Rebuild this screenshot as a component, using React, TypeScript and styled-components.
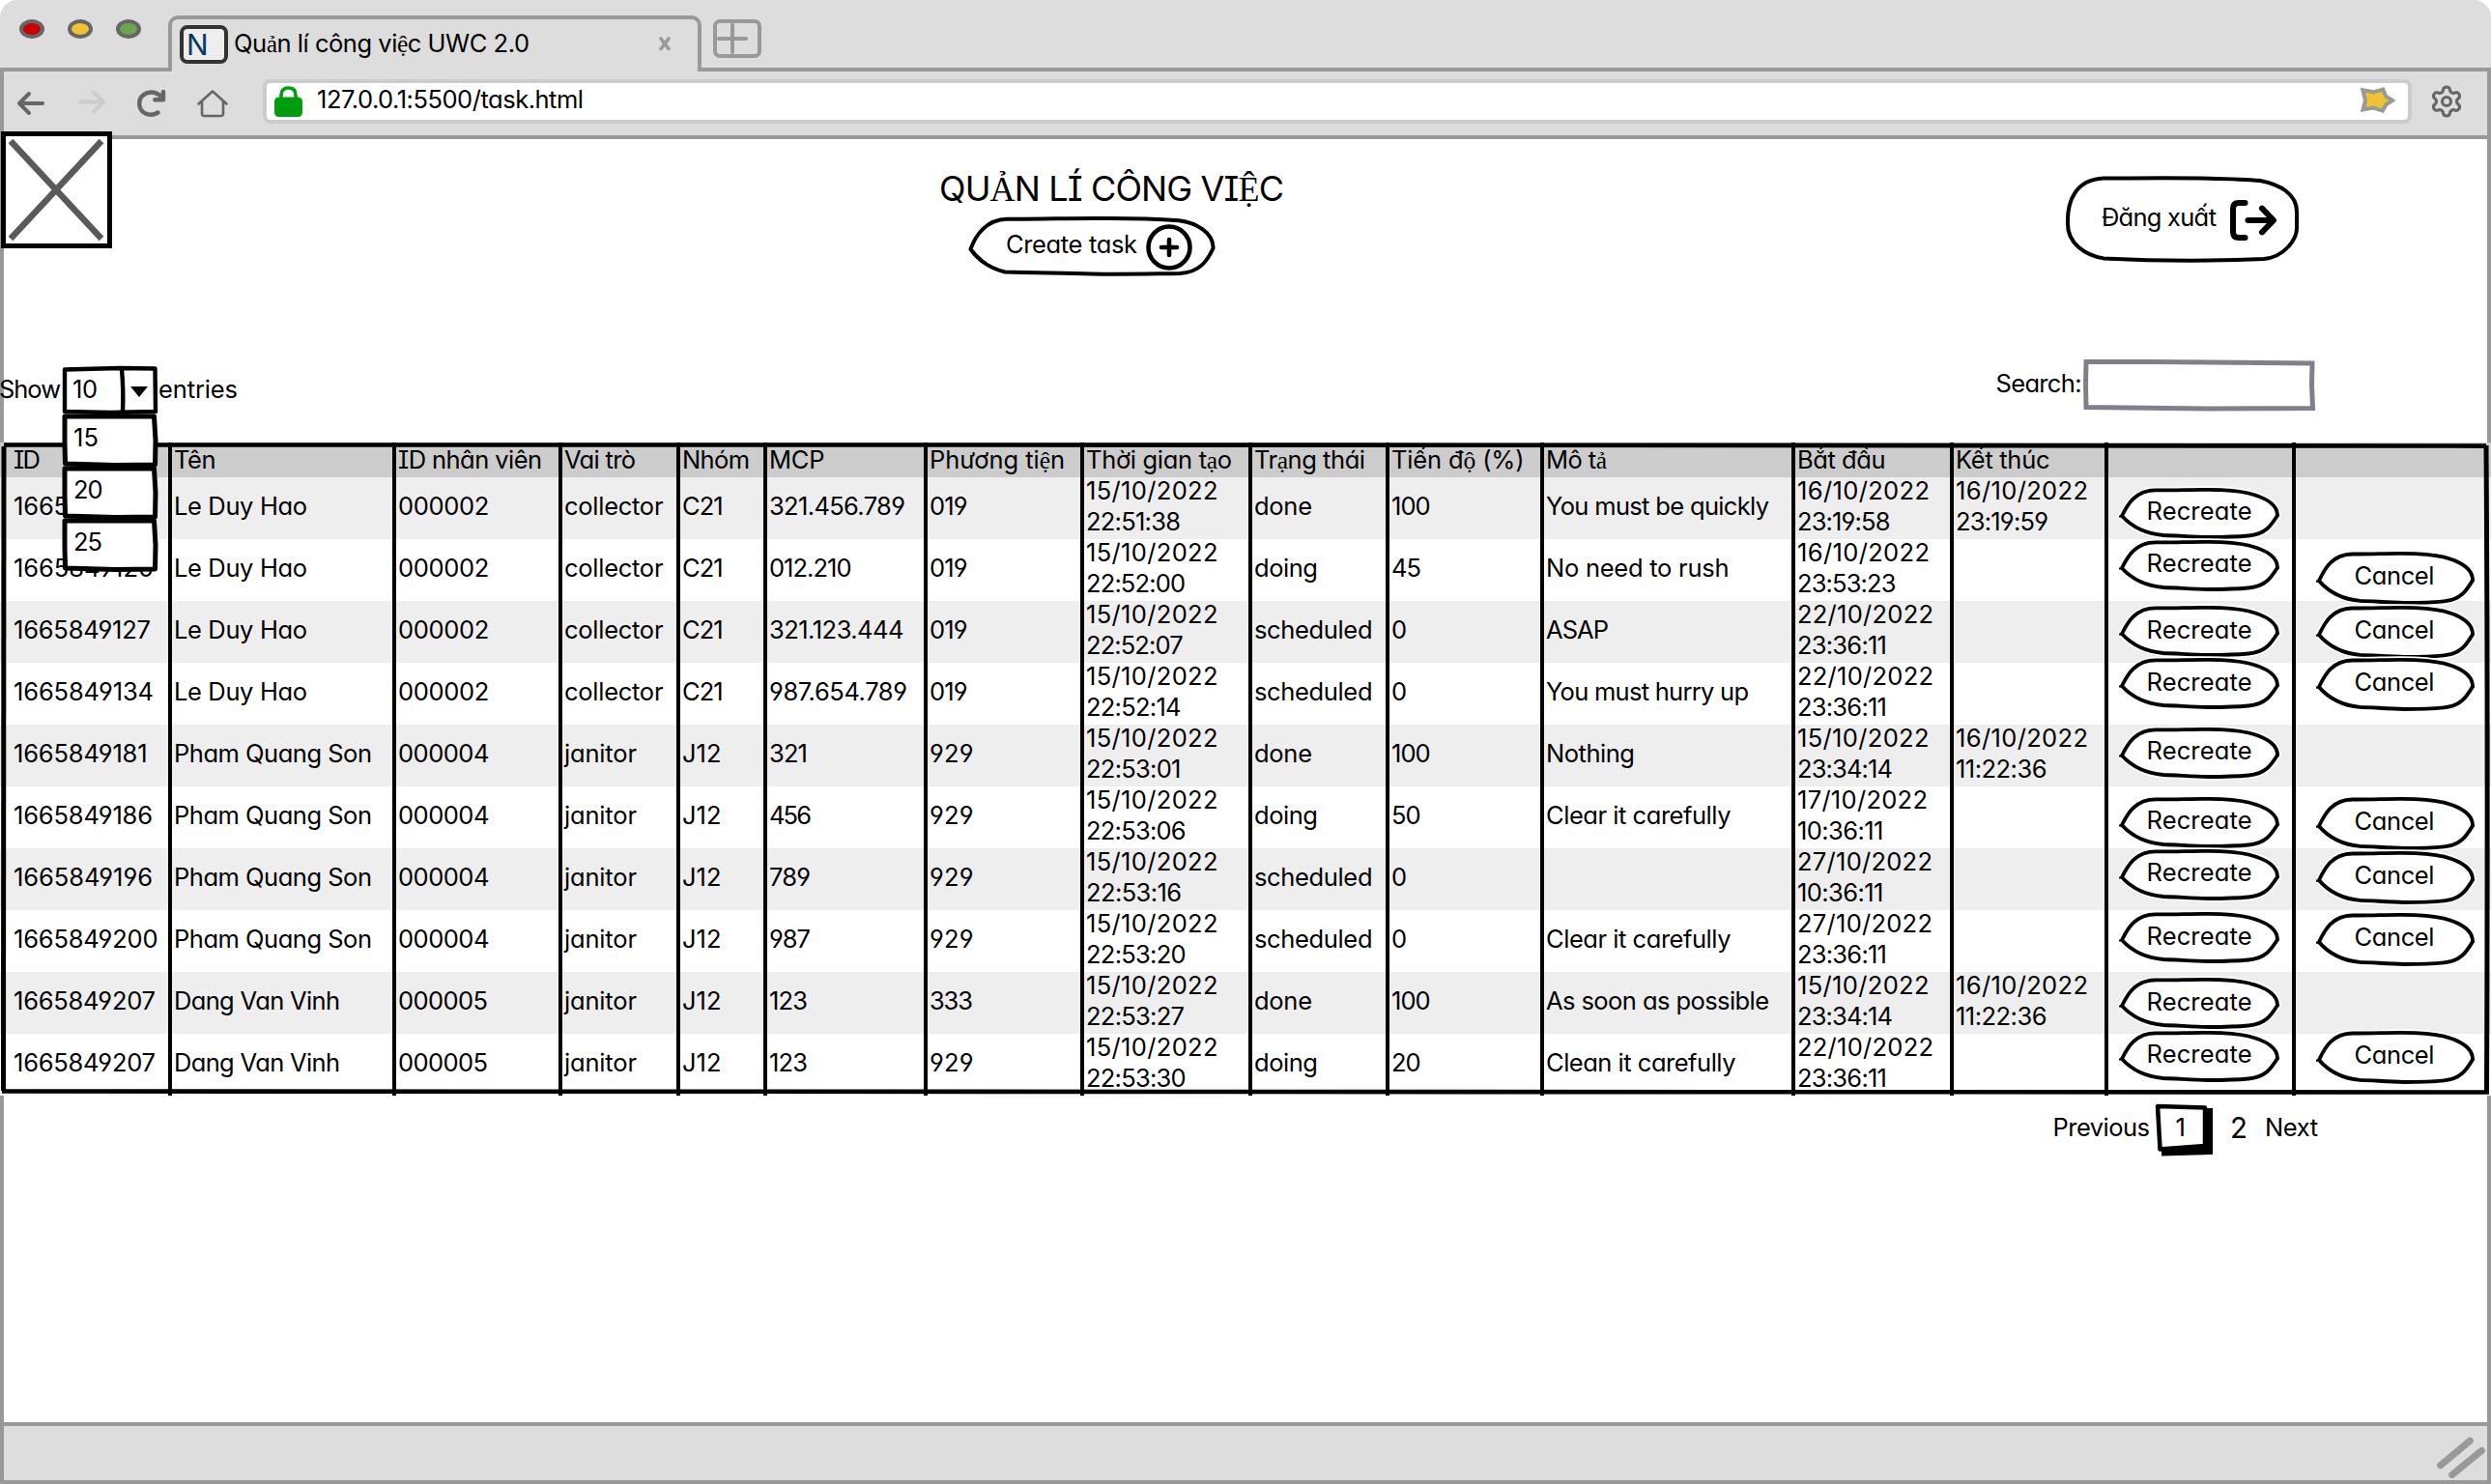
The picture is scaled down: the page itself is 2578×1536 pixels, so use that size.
import React, { useLayoutEffect, useRef, useState } from 'react';
import styled, { createGlobalStyle } from 'styled-components';
import { Settings } from 'lucide-react';

const GlobalStyle = createGlobalStyle`
  *, *::before, *::after { box-sizing: border-box; }
  body { margin: 0; background: #fff; }
  button, input { font: inherit; color: inherit; }
  svg { display: block; flex: none; overflow: visible; }
`;

const line = '#999999';
const chrome = '#dddddd';

/* ---------- text ---------- */

const TextSpan = styled.span<{ $size: number; $color: string; $weight: number }>`
  display: inline-block;
  white-space: pre;
  font-family: Inter, 'Noto Sans', sans-serif;
  font-feature-settings: 'cv11' 1, 'cv08' 1, 'cv04' 1;
  font-kerning: normal;
  font-variant-ligatures: no-contextual;
  font-weight: ${(p) => p.$weight};
  font-size: ${(p) => p.$size}px;
  line-height: ${(p) => (p.$size > 33 ? 44 : 32)}px;
  color: ${(p) => p.$color};
`;

const SerifGlyph = styled.span`
  font-family: 'Liberation Serif', serif;
  line-height: 1;
`;

/* Ink width of every label, in px; tracking is derived from it. */
const widths: Record<string, number> = {
  'Quản lí công việc UWC 2.0': 304, '127.0.0.1:5500/task.html': 274,
  'QUẢN LÍ CÔNG VIỆC': 355, 'Create task': 134, 'Đăng xuất': 117,
  Show: 62, entries: 80, 'Search:': 87, Recreate: 107, Cancel: 81, Previous: 98.5, Next: 53,
  ID: 26, 'Tên': 41.5, 'ID nhân viên': 147, 'Vai trò': 72, 'Nhóm': 68, MCP: 55.5,
  'Phương tiện': 138, 'Thời gian tạo': 149, 'Trạng thái': 113, 'Tiến độ (%)': 135.5,
  'Mô tả': 61, 'Bắt đầu': 89.5, 'Kết thúc': 95.5,
  '1665849098': 147, '1665849120': 143, '1665849127': 140, '1665849134': 143, '1665849181': 136.6,
  '1665849186': 142, '1665849196': 142, '1665849200': 147.5, '1665849207': 145,
  'Le Duy Hao': 136, 'Pham Quang Son': 203, 'Dang Van Vinh': 170,
  '000002': 92.4, '000004': 92.4, '000005': 91, collector: 100.5, janitor: 73,
  C21: 40.6, J12: 38.5, '321.456.789': 139, '012.210': 83.5, '321.123.444': 137.5,
  '987.654.789': 141, '321': 38, '456': 42, '789': 41, '987': 41, '123': 38,
  '019': 37.5, '929': 43.5, '333': 43,
  '15/10/2022': 134.5, '16/10/2022': 135, '17/10/2022': 133, '22/10/2022': 139, '27/10/2022': 138,
  '22:51:38': 96, '22:52:00': 101, '22:52:07': 98.6, '22:52:14': 96.5, '22:53:01': 96.4,
  '22:53:06': 101.6, '22:53:16': 97, '22:53:20': 101.6, '22:53:27': 100, '22:53:30': 101.6,
  '23:19:58': 94.5, '23:53:23': 100.5, '23:36:11': 91, '23:34:14': 97, '10:36:11': 87.5,
  '23:19:59': 94, '11:22:36': 92.5,
  done: 58, doing: 64, scheduled: 120.5, '100': 38.7, '45': 29, '50': 28.7, '20': 28.7,
  '10': 24, '15': 24, '25': 28,
  'You must be quickly': 229, 'No need to rush': 187.5, ASAP: 63, 'You must hurry up': 208,
  Nothing: 90, 'Clear it carefully': 189.5, 'As soon as possible': 229, 'Clean it carefully': 194.5,
};

type LabelProps = { children: string; size?: number; color?: string; weight?: number };

function Label({ children, size = 25.5, color = '#000', weight = 400 }: LabelProps) {
  const ref = useRef<HTMLSpanElement>(null);
  const [tracking, setTracking] = useState(0);
  useLayoutEffect(() => {
    const target = widths[children];
    if (!ref.current || !target || children.length < 2) return;
    const natural = ref.current.getBoundingClientRect().width;
    setTracking((target + 2 - natural) / (children.length - 1));
  }, [children]);
  return (
    <TextSpan ref={ref} $size={size} $color={color} $weight={weight} style={{ letterSpacing: tracking }}>
      {children.split(/([ảệạộẢỆ])/).map((part, i) => (i % 2 ? <SerifGlyph key={i}>{part}</SerifGlyph> : part))}
    </TextSpan>
  );
}

/* ---------- browser chrome ---------- */

const Window = styled.div`
  width: 2578px;
  height: 1536px;
  display: flex;
  flex-direction: column;
  overflow: hidden;
  background: #fff;
`;

const TabStrip = styled.header`
  height: 74px;
  display: flex;
  align-items: flex-start;
  background: linear-gradient(${line}, ${line}) 0 70px / 100% 4px no-repeat ${chrome};
  border-radius: 18px 18px 0 0;
`;

const Lights = styled.div`
  display: flex;
  gap: 24px;
  padding: 20px 0 0 20px;
  width: 174px;
`;

const Light = styled.i<{ $color: string }>`
  width: 26px;
  height: 20px;
  border: 4px solid #666;
  border-radius: 50%;
  background: ${(p) => p.$color};
`;

const Tab = styled.div`
  width: 552px;
  height: 58px;
  margin-top: 16px;
  padding: 6px 28px 0 8px;
  display: flex;
  align-items: flex-start;
  border: 4px solid ${line};
  border-bottom: 0;
  border-radius: 10px 10px 0 0;
  background: ${chrome};
`;

const Favicon = styled.div`
  width: 50px;
  height: 40px;
  padding-left: 3px;
  display: flex;
  align-items: center;
  line-height: 30px;
  border: 4px solid #333;
  border-radius: 8px;
  background: #eee;
`;

const TabTitle = styled.div`
  flex: 1;
  padding: 3px 0 0 6px;
`;

const CloseMark = styled.svg`
  margin-top: 12px;
`;

const NewTab = styled.div`
  width: 50px;
  height: 40px;
  margin: 20px 0 0 12px;
  border: 4px solid ${line};
  border-radius: 7px;
`;

const Toolbar = styled.div`
  height: 70px;
  display: flex;
  align-items: center;
  padding: 0 24px 4px 14px;
  border: solid ${line};
  border-width: 0 4px 4px;
  background: ${chrome};
`;

const NavIcons = styled.div`
  width: 254px;
  display: flex;
  align-items: center;
  padding-top: 4px;
`;

const NavIcon = styled.svg<{ $gap: number }>`
  margin-right: ${(p) => p.$gap}px;
  fill: none;
  stroke-linecap: round;
  stroke-linejoin: round;
`;

const AddressBar = styled.div`
  flex: 1;
  height: 46px;
  margin-right: 18px;
  padding: 0 12px 0 8px;
  display: flex;
  align-items: center;
  border: 4px solid #ccc;
  border-radius: 8px;
  background: #fff;
`;

const Url = styled.div`
  flex: 1;
  padding: 0 0 4px 15px;
`;

const StatusBar = styled.footer`
  height: 64px;
  display: flex;
  justify-content: flex-end;
  align-items: flex-start;
  border: solid ${line};
  border-width: 4px;
  background: ${chrome};
`;

/* ---------- page ---------- */

const Page = styled.main`
  height: 1328px;
  box-shadow: inset 4px 0 ${line}, inset -4px 0 ${line};
`;

const PageHead = styled.section`
  height: 228px;
  display: flex;
  align-items: flex-start;
`;

const Picture = styled.div`
  width: 115px;
  height: 121px;
  margin: -8px 0 0 1px;
  border: 5px solid #000;
  background: #fff;
`;

const Heading = styled.div`
  width: 1166px;
  margin: 29px 0 0 856px;
  display: flex;
  flex-direction: column;
  align-items: flex-start;
  gap: 7px;
`;

const PageTitle = styled.h1`
  margin: 0;
  height: 44px;
  font-weight: 400;
`;

const PillRoot = styled.button<{ $w: number; $h: number; $ml: number; $mt: number }>`
  position: relative;
  flex: none;
  width: ${(p) => p.$w}px;
  height: ${(p) => p.$h}px;
  margin: ${(p) => p.$mt}px 0 0 ${(p) => p.$ml}px;
  padding: 0;
  display: flex;
  align-items: flex-start;
  border: 0;
  background: none;
`;

const Outline = styled.svg`
  position: absolute;
  inset: 0;
  fill: #fff;
  stroke-linejoin: round;
`;

const PillContent = styled.div<{ $left: number; $top: number; $gap?: number }>`
  position: relative;
  display: flex;
  align-items: flex-start;
  gap: ${(p) => p.$gap ?? 0}px;
  padding: ${(p) => p.$top}px 0 0 ${(p) => p.$left}px;
`;

const PillIcon = styled.svg<{ $lift: number }>`
  margin-top: -${(p) => p.$lift}px;
  fill: none;
  stroke: #000;
  stroke-linecap: round;
  stroke-linejoin: round;
`;

const Controls = styled.section`
  height: 86px;
  display: flex;
  align-items: flex-start;
`;

const ShowLabel = styled.div`
  width: 65px;
  margin: 14.5px 0 0 -1px;
`;

const Select = styled.div`
  position: relative;
  width: 99px;
  height: 50px;
  margin-top: 7px;
`;

const SelectFace = styled.div`
  position: relative;
  padding: 7.5px 0 0 11px;
`;

const Options = styled.div`
  position: absolute;
  z-index: 3;
  top: 49px;
  left: 0;
  width: 99px;
`;

const Option = styled.div`
  position: relative;
  height: 54px;
  padding: 9px 0 0 12px;
`;

const OptionText = styled.div`
  position: relative;
`;

const EntriesLabel = styled.div`
  flex: 1;
  margin: 14.5px 0 0 1px;
`;

const Search = styled.label`
  display: flex;
  align-items: flex-start;
  width: 513px;
`;

const SearchText = styled.div`
  width: 91px;
  padding: 9px 0 0 0.5px;
`;

/* ---------- table ---------- */

const Table = styled.section`
  position: relative;
  height: 676px;
  background: #fff;
`;

const columns = '174px 232px 172px 122px 90px 166px 162px 174px 142px 160px 260px 164px 160px 194px 206px';

const Row = styled.div<{ $tone: string; $h: number }>`
  display: grid;
  grid-template-columns: ${columns};
  grid-template-rows: ${(p) => p.$h}px;
  height: ${(p) => p.$h}px;
  background: ${(p) => p.$tone};
`;

const Cell = styled.div`
  min-width: 0;
  display: flex;
  flex-direction: column;
  justify-content: center;
  align-items: flex-start;
  padding: 0 0 4px 2px;
  border-left: 4px solid #000;
  &:first-child { border-left: 0; padding-left: 14px; }
`;

const HeadCell = styled(Cell)`
  justify-content: flex-end;
  padding-bottom: 2px;
`;

const ActionCell = styled.div`
  position: relative;
  border-left: 4px solid #000;
`;

const Frame = styled.svg`
  position: absolute;
  inset: 0;
  fill: none;
  stroke: #000;
`;

const Pager = styled.nav`
  display: flex;
  align-items: flex-start;
  justify-content: flex-end;
  padding: 8px 178px 0 0;
`;

const PagerText = styled.div<{ $w: number; $top: number }>`
  width: ${(p) => p.$w}px;
  padding-top: ${(p) => p.$top}px;
`;

const CurrentPage = styled.div`
  position: relative;
  width: 60px;
  height: 54px;
  padding: 9px 0 0 21.5px;
`;

const CurrentPageText = styled.div`
  position: relative;
`;

const NextPage = styled.div`
  padding-left: 18px;
`;

function CreateButton() {
  return (
    <PillRoot $w={255} $h={62} $ml={30} $mt={0}>
      <Outline width="255" height="62" stroke="#000" strokeWidth="4">
        <path d="M2.5 34C7 21 18 3 40 2.7C76 3 110 1.5 145 2C172 2 195 2.6 218 4.3C236 6.5 254 17 253.5 33C248 45 240 58 219 59C182 59.5 160 60.2 128 59.5C98 58.5 68 58.6 38 57.5C23 54 12 47 2.5 34Z" />
      </Outline>
      <PillContent $left={39} $top={13} $gap={9.5}>
        <Label>Create task</Label>
        <PillIcon $lift={5} width="48" height="48" viewBox="0 0 48 48" strokeWidth="4.6">
          <circle cx="24" cy="24" r="21.5" />
          <path d="M24 16v16M16 24h16" />
        </PillIcon>
      </PillContent>
    </PillRoot>
  );
}

function LogoutButton() {
  return (
    <PillRoot $w={241} $h={90} $ml={0} $mt={38}>
      <Outline width="241" height="90" stroke="#000" strokeWidth="4">
        <path d="M39 2.6C80 2.6 160 1 201 5C222 9 239 19 239 37V54C239 66 226 84 205 86C150 88.5 90 88 39 85.4C20 82 2 70 2 50C1 26 10 4 39 2.6Z" />
      </Outline>
      <PillContent $left={37} $top={27} $gap={15}>
        <Label>Đăng xuất</Label>
        <PillIcon $lift={2} width="50" height="42" viewBox="0 0 50 42" strokeWidth="6">
          <path d="M15.5 3H9Q3 3 3 9V33Q3 39 9 39H15.5" />
          <path d="M18.5 21H44M33 8.7L45 21L33 33.3" />
        </PillIcon>
      </PillContent>
    </PillRoot>
  );
}

const pillPath =
  'M3 29C9 17 17 2.5 38 2.4C58 2.6 75 1.6 90 1.8C108 1.8 122 2.6 134 5.5C152 10 164 17 164 28.5C158 38 152 48 134 49.5C118 51 104 51 92 51C76 50.5 60 49.5 46 49C28 47.5 14 41 3 29Z';

function ActionButton({ kind, offset }: { kind: 'Recreate' | 'Cancel'; offset: number }) {
  const recreate = kind === 'Recreate';
  return (
    <PillRoot $w={166} $h={53} $ml={recreate ? 10.5 : 20.5} $mt={offset}>
      <Outline width={recreate ? 166 : 164} height={recreate ? 53 : 55} viewBox="0 0 166 53" preserveAspectRatio="none">
        <path d={pillPath} stroke="#fff" strokeWidth="7" />
        <path d={pillPath} stroke="#000" strokeWidth="3.8" />
        <path d="M0 29.5h5M162 28.5h4" stroke="#000" strokeWidth="2" />
      </Outline>
      <PillContent $left={recreate ? 29 : 40} $top={recreate ? 8.7 : 9.2}>
        <Label>{kind}</Label>
      </PillContent>
    </PillRoot>
  );
}

type Task = {
  cells: string[];
  created: string;
  status: string;
  progress: string;
  note: string;
  start: [string, string];
  end?: [string, string];
  recreate: number;
  cancel?: number;
};

const hao = ['Le Duy Hao', '000002', 'collector', 'C21'];
const son = ['Pham Quang Son', '000004', 'janitor', 'J12'];
const vinh = ['Dang Van Vinh', '000005', 'janitor', 'J12'];

const tasks: Task[] = [
  { cells: ['1665849098', ...hao, '321.456.789', '019'], created: '22:51:38', status: 'done', progress: '100', note: 'You must be quickly', start: ['16/10/2022', '23:19:58'], end: ['16/10/2022', '23:19:59'], recreate: 10.7 },
  { cells: ['1665849120', ...hao, '012.210', '019'], created: '22:52:00', status: 'doing', progress: '45', note: 'No need to rush', start: ['16/10/2022', '23:53:23'], recreate: 0.7, cancel: 12.8 },
  { cells: ['1665849127', ...hao, '321.123.444', '019'], created: '22:52:07', status: 'scheduled', progress: '0', note: 'ASAP', start: ['22/10/2022', '23:36:11'], recreate: 5, cancel: 4.6 },
  { cells: ['1665849134', ...hao, '987.654.789', '019'], created: '22:52:14', status: 'scheduled', progress: '0', note: 'You must hurry up', start: ['22/10/2022', '23:36:11'], recreate: -5.2, cancel: -5.2 },
  { cells: ['1665849181', ...son, '321', '929'], created: '22:53:01', status: 'done', progress: '100', note: 'Nothing', start: ['15/10/2022', '23:34:14'], end: ['16/10/2022', '11:22:36'], recreate: 2.7 },
  { cells: ['1665849186', ...son, '456', '929'], created: '22:53:06', status: 'doing', progress: '50', note: 'Clear it carefully', start: ['17/10/2022', '10:36:11'], recreate: 10.6, cancel: 10.8 },
  { cells: ['1665849196', ...son, '789', '929'], created: '22:53:16', status: 'scheduled', progress: '0', note: '', start: ['27/10/2022', '10:36:11'], recreate: 0.6, cancel: 2.8 },
  { cells: ['1665849200', ...son, '987', '929'], created: '22:53:20', status: 'scheduled', progress: '0', note: 'Clear it carefully', start: ['27/10/2022', '23:36:11'], recreate: 2.4, cancel: 2.8 },
  { cells: ['1665849207', ...vinh, '123', '333'], created: '22:53:27', status: 'done', progress: '100', note: 'As soon as possible', start: ['15/10/2022', '23:34:14'], end: ['16/10/2022', '11:22:36'], recreate: 6.3 },
  { cells: ['1665849207', ...vinh, '123', '929'], created: '22:53:30', status: 'doing', progress: '20', note: 'Clean it carefully', start: ['22/10/2022', '23:36:11'], recreate: -3.5, cancel: -3.2 },
];

const headings = ['ID', 'Tên', 'ID nhân viên', 'Vai trò', 'Nhóm', 'MCP', 'Phương tiện', 'Thời gian tạo', 'Trạng thái', 'Tiến độ (%)', 'Mô tả', 'Bắt đầu', 'Kết thúc', '', ''];

function TaskRow({ task, index }: { task: Task; index: number }) {
  return (
    <Row $h={64} $tone={index % 2 ? '#fff' : '#eeeeee'}>
      {task.cells.map((text, i) => (
        <Cell key={i}><Label>{text}</Label></Cell>
      ))}
      <Cell><Label>15/10/2022</Label><Label>{task.created}</Label></Cell>
      <Cell><Label>{task.status}</Label></Cell>
      <Cell><Label>{task.progress}</Label></Cell>
      <Cell>{task.note && <Label>{task.note}</Label>}</Cell>
      <Cell><Label>{task.start[0]}</Label><Label>{task.start[1]}</Label></Cell>
      <Cell>{task.end && <><Label>{task.end[0]}</Label><Label>{task.end[1]}</Label></>}</Cell>
      <ActionCell><ActionButton kind="Recreate" offset={task.recreate} /></ActionCell>
      <ActionCell>{task.cancel !== undefined && <ActionButton kind="Cancel" offset={task.cancel} />}</ActionCell>
    </Row>
  );
}

function BrowserTop() {
  return (
    <>
      <TabStrip>
        <Lights>
          <Light $color="#cc0000" />
          <Light $color="#f1c232" />
          <Light $color="#6aa84f" />
        </Lights>
        <Tab>
          <Favicon><Label size={30} color="#073763">N</Label></Favicon>
          <TabTitle><Label>Quản lí công việc UWC 2.0</Label></TabTitle>
          <CloseMark width="12" height="14" viewBox="0 0 12 14" stroke="#999" strokeWidth="3.6" strokeLinecap="round">
            <path d="M2 2L10 12.5M10 2L2 12.5" />
          </CloseMark>
        </Tab>
        <NewTab>
          <svg width="42" height="32" viewBox="0 0 42 32" stroke={line} strokeWidth="4" strokeLinecap="round">
            <path d="M16 2V30M2 16H30" />
          </svg>
        </NewTab>
      </TabStrip>
      <Toolbar>
        <NavIcons>
          <NavIcon $gap={35} width="28" height="24" viewBox="0 0 28 24" stroke="#666" strokeWidth="4">
            <path d="M26 12H3M12 2L2 12L12 22" />
          </NavIcon>
          <NavIcon $gap={33} width="28" height="24" viewBox="0 0 28 24" stroke="#ccc" strokeWidth="4">
            <path d="M2 10.500H25M16 0.500L26 10.500L16 20.500" />
          </NavIcon>
          <NavIcon $gap={32} width="30" height="28" viewBox="0 0 30 28" stroke="#666" strokeWidth="4.4">
            <path d="M21.500 23.500C12 29 2.200 23.500 2.200 14C2.200 4 15 -2 25 7" />
            <path d="M27 2V10.300H18.300" />
          </NavIcon>
          <NavIcon $gap={0} width="32" height="29" viewBox="0 0 32 29" stroke="#666" strokeWidth="2.6">
            <path d="M1.500 14.500L16 1.500L30.500 14.500M5 12V24.500Q5 27 7.500 27H24.500Q27 27 27 24.500V12" />
          </NavIcon>
        </NavIcons>
        <AddressBar>
          <svg width="29" height="32" viewBox="0 0 29 32">
            <path d="M7 13V9.500C7 4.500 10 2 14.500 2S22 4.500 22 9.500V13" fill="none" stroke="#009e0f" strokeWidth="3.6" />
            <rect x="0" y="11.500" width="29" height="20.500" rx="4.500" fill="#009e0f" />
          </svg>
          <Url><Label>127.0.0.1:5500/task.html</Label></Url>
          <svg width="37" height="28" viewBox="0 0 37 28">
            <path d="M2.300 2.200L13.500 4.300L23.300 1.400L26.200 8.700L33 13L26.400 17.200L22.800 23.700L13.200 20.500L2.500 22.500L5 13Z" fill="#f1c232" stroke="#999" strokeWidth="4" />
          </svg>
        </AddressBar>
        <Settings size={36} color="#666" strokeWidth={2.1} />
      </Toolbar>
    </>
  );
}

export default function App() {
  return (
    <>
      <GlobalStyle />
      <Window>
        <BrowserTop />
        <Page>
          <PageHead>
            <Picture>
              <svg width="105" height="111" viewBox="0 0 105 111" stroke="#5a5a5a" strokeWidth="6.5">
                <path d="M5 5L99 106M99 5L5 106" />
              </svg>
            </Picture>
            <Heading>
              <PageTitle><Label size={36}>QUẢN LÍ CÔNG VIỆC</Label></PageTitle>
              <CreateButton />
            </Heading>
            <LogoutButton />
          </PageHead>
          <Controls>
            <ShowLabel><Label>Show</Label></ShowLabel>
            <Select>
              <Outline width="99" height="50" stroke="#000" strokeWidth="4.4">
                <path d="M3 3.500L60 2L96.500 2.500L97 47L50 48L3 47Z" />
                <path d="M62 3Q64 26 63 47" />
                <path d="M71 21H89L80 32Z" fill="#000" stroke="none" />
              </Outline>
              <SelectFace><Label>10</Label></SelectFace>
              <Options>
                {['15', '20', '25'].map((n) => (
                  <Option key={n}>
                    <Outline width="99" height="56" stroke="#000" strokeWidth="5">
                      <path d="M3 3L95.500 3L97 28L96.500 53L55 53.500L3.500 52L3 30Z" />
                    </Outline>
                    <OptionText><Label>{n}</Label></OptionText>
                  </Option>
                ))}
              </Options>
            </Select>
            <EntriesLabel><Label>entries</Label></EntriesLabel>
            <Search>
              <SearchText><Label>Search:</Label></SearchText>
              <svg width="240" height="54" viewBox="0 0 240 54" fill="#fff" stroke="#80808c" strokeWidth="5">
                <path d="M3 2.500L70 2.500L237 4L236.500 26L237.500 50.500L130 51L3 49.500L2.500 26Z" />
              </svg>
            </Search>
          </Controls>
          <Table>
            <Row $h={36} $tone="#cccccc">
              {headings.map((text, i) => (
                <HeadCell key={i}>{text && <Label>{text}</Label>}</HeadCell>
              ))}
            </Row>
            {tasks.map((task, i) => <TaskRow key={i} task={task} index={i} />)}
            <Frame width="2578" height="676" viewBox="0 0 2578 676">
              <path d="M4 2.500L1400 2.600L2573 3.600" strokeWidth="4.6" />
              <path d="M4 4Q5 300 3.500 671" strokeWidth="5" />
              <path d="M2573 3Q2575 300 2573.500 674" strokeWidth="5" />
              <path d="M2 671.500L1200 672L2576 672.500" strokeWidth="4.6" />
            </Frame>
          </Table>
          <Pager>
            <PagerText $w={105.5} $top={9}><Label>Previous</Label></PagerText>
            <CurrentPage>
              <Outline width="60" height="54" stroke="none">
                <path d="M7 5H60V53L7 54.500Z" fill="#000" />
                <path d="M3 3L52 4.500V44L5.500 47.500Z" fill="#fff" stroke="#000" strokeWidth="4.5" />
              </Outline>
              <CurrentPageText><Label>1</Label></CurrentPageText>
            </CurrentPage>
            <PagerText $w={54} $top={9}><NextPage><Label size={29.5}>2</Label></NextPage></PagerText>
            <PagerText $w={56} $top={9}><Label>Next</Label></PagerText>
          </Pager>
        </Page>
        <StatusBar>
          <svg width="54" height="56" viewBox="0 0 54 56" stroke={line} strokeWidth="7" strokeLinecap="round">
            <path d="M5.700 40.700L36.300 15.300M17.700 50.500L48.300 25.500" />
          </svg>
        </StatusBar>
      </Window>
    </>
  );
}
